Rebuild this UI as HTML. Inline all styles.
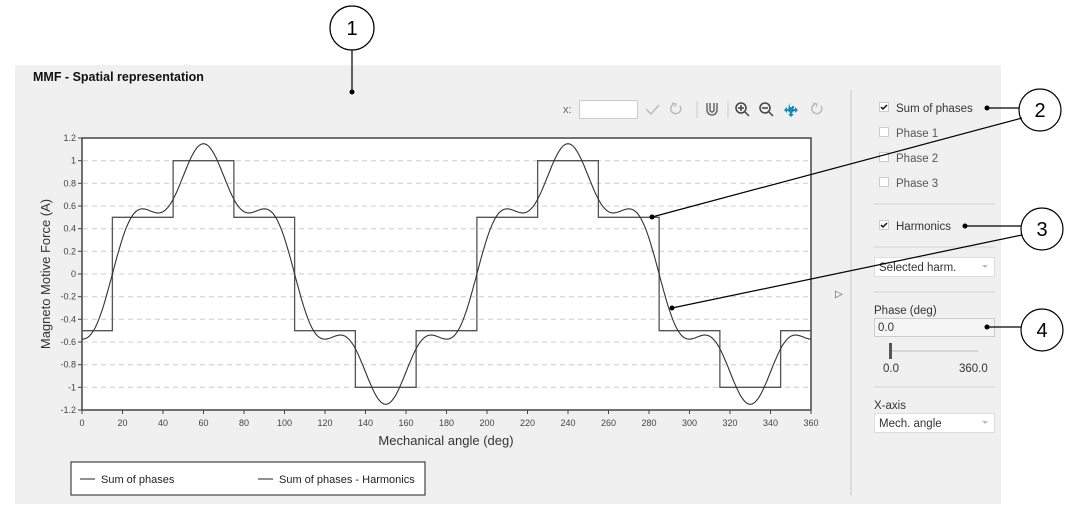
<!DOCTYPE html>
<html><head><meta charset="utf-8"><style>
body{margin:0;width:1080px;height:515px;background:#fff;font-family:"Liberation Sans",Arial,sans-serif;overflow:hidden;position:relative}
svg{position:absolute;left:0;top:0}
text{font-family:"Liberation Sans",Arial,sans-serif}
</style></head><body>
<svg id="s" width="1080" height="515" viewBox="0 0 1080 515">
<rect x="15" y="65" width="986" height="439" fill="#f0f0f0"/>
<text x="33" y="81" font-size="12.5" font-weight="bold" fill="#111">MMF - Spatial representation</text>
<line x1="851" y1="90" x2="851" y2="495" stroke="#c8c8c8"/>
<text x="563" y="113" font-size="11" fill="#666">x:</text>
<rect x="579.5" y="100.5" width="58" height="18" fill="#fff" stroke="#ccc"/>
<path d="M646 109 l5 5 l8 -9" fill="none" stroke="#bbb" stroke-width="1.5"/>
<path d="M674 104 a5 5 0 1 0 6 2" fill="none" stroke="#bbb" stroke-width="1.5"/><path d="M672 103 l4 1 l-1 3" fill="none" stroke="#bbb" stroke-width="1.3"/>
<line x1="697" y1="101" x2="697" y2="118" stroke="#ccc"/>
<path d="M707 103 v7 a5 5 0 0 0 10 0 v-7 M710 103 v7 a2 2 0 0 0 4 0 v-7" fill="none" stroke="#555" stroke-width="1.3"/>
<line x1="728" y1="101" x2="728" y2="118" stroke="#ccc"/>
<circle cx="741" cy="108" r="5" fill="none" stroke="#444" stroke-width="1.5"/><path d="M738 108h6M741 105v6M745 112l4 4" stroke="#444" stroke-width="1.5"/>
<circle cx="765" cy="108" r="5" fill="none" stroke="#444" stroke-width="1.5"/><path d="M762 108h6M769 112l4 4" stroke="#444" stroke-width="1.5"/>
<path d="M791 103l3 3h-2v2h2v-2M791 103l-3 3h2v2h-2M784 110l3-3v2h2v2h-2v2zM798 110l-3-3v2h-2v2h2v2zM791 117l3-3h-2v-2h-2v2h-2z" fill="#1a8ab8"/>
<circle cx="791" cy="110" r="3" fill="#1a8ab8"/>
<path d="M815 104 a5 5 0 1 0 6 2" fill="none" stroke="#bbb" stroke-width="1.5"/><path d="M813 103 l4 1 l-1 3" fill="none" stroke="#bbb" stroke-width="1.3"/>
<rect x="82" y="138" width="729" height="272" fill="#fff"/>
<g id="grid"></g>
<rect x="82" y="138" width="729" height="272" fill="none" stroke="#444" stroke-width="1.5"/>
<path id="step" fill="none" stroke="#555" stroke-width="1.3"/>
<path id="harm" fill="none" stroke="#333" stroke-width="1.1"/>
<text x="446" y="445" font-size="13" fill="#333" text-anchor="middle">Mechanical angle (deg)</text>
<text transform="translate(50,274) rotate(-90)" font-size="13" fill="#333" text-anchor="middle">Magneto Motive Force (A)</text>
<text x="835" y="297" font-size="10" fill="#555">▷</text>
<rect x="71" y="462" width="354" height="33" fill="#fff" stroke="#444" stroke-width="1.2"/>
<line x1="80" y1="479" x2="95" y2="479" stroke="#222"/><text x="101" y="483" font-size="11" fill="#222">Sum of phases</text>
<line x1="258" y1="479" x2="273" y2="479" stroke="#222"/><text x="279" y="483" font-size="11" fill="#222">Sum of phases - Harmonics</text>
<g font-size="11.5" fill="#333">
<rect x="879.5" y="102.5" width="9" height="9" fill="#fff" stroke="#ccc"/><path d="M881 107l2 2l4-4" stroke="#111" stroke-width="1.5" fill="none"/><text x="896" y="112">Sum of phases</text>
<rect x="879.5" y="127.5" width="9" height="9" fill="#fff" stroke="#ccc"/><text x="896" y="137" fill="#555">Phase 1</text>
<rect x="879.5" y="152.5" width="9" height="9" fill="#fff" stroke="#ccc"/><text x="896" y="162" fill="#555">Phase 2</text>
<rect x="879.5" y="177.5" width="9" height="9" fill="#fff" stroke="#ccc"/><text x="896" y="187" fill="#555">Phase 3</text>
<line x1="874" y1="204" x2="995" y2="204" stroke="#d4d4d4"/>
<rect x="879.5" y="220.5" width="9" height="9" fill="#fff" stroke="#ccc"/><path d="M881 225l2 2l4-4" stroke="#111" stroke-width="1.5" fill="none"/><text x="896" y="230">Harmonics</text>
<line x1="874" y1="247" x2="995" y2="247" stroke="#d4d4d4"/>
<rect x="874.5" y="257.5" width="120" height="19" fill="#fff" stroke="#ddd"/><text x="879" y="271">Selected harm.</text><path d="M982 265l3 3l3-3z" fill="#bbb"/>
<line x1="874" y1="292" x2="995" y2="292" stroke="#d4d4d4"/>
<text x="874" y="314">Phase (deg)</text>
<rect x="874.5" y="318.5" width="120" height="18" fill="#f5f5f5" stroke="#ccc"/><text x="878" y="331">0.0</text>
<line x1="891" y1="351" x2="978" y2="351" stroke="#bbb"/><rect x="889" y="343" width="3" height="16" fill="#555"/>
<text x="883" y="372">0.0</text><text x="959" y="372">360.0</text>
<line x1="874" y1="387" x2="995" y2="387" stroke="#d4d4d4"/>
<text x="874" y="409">X-axis</text>
<rect x="874.5" y="413.5" width="120" height="19" fill="#fff" stroke="#ddd"/><text x="879" y="427">Mech. angle</text><path d="M982 421l3 3l3-3z" fill="#bbb"/>
</g>
<g stroke="#000" fill="none" stroke-width="1.2">
<circle cx="352" cy="28" r="22" fill="#fff"/>
<line x1="352" y1="50" x2="352" y2="92"/>
<circle cx="1040" cy="110" r="21" fill="#fff"/>
<line x1="988" y1="108" x2="1019" y2="108"/><line x1="1022" y1="118" x2="652" y2="217"/>
<circle cx="1042" cy="229" r="21" fill="#fff"/>
<line x1="966" y1="226" x2="1021" y2="226"/><line x1="1022" y1="235" x2="672" y2="308"/>
<circle cx="1042" cy="330" r="21" fill="#fff"/>
<line x1="988" y1="327" x2="1021" y2="327"/>
</g>
<g fill="#000"><circle cx="352" cy="92" r="2.5"/><circle cx="987" cy="108" r="2.5"/><circle cx="652" cy="217" r="2.5"/><circle cx="965" cy="226" r="2.5"/><circle cx="672" cy="308" r="2.5"/><circle cx="987" cy="327" r="2.5"/></g>
<g font-size="20" fill="#000" text-anchor="middle"><text x="352" y="35">1</text><text x="1040" y="117">2</text><text x="1042" y="236">3</text><text x="1042" y="337">4</text></g>
</svg>
<script>
var X=function(d){return 82+d*729/360},Y=function(v){return 274-v*113.33};
var g='';
for(var v=-1.2;v<=1.21;v+=0.2){var y=Y(v).toFixed(1);var lab=Math.abs(v)<1e-6?'0':(Math.round(v*10)/10).toString();
if(Math.abs(v)<1.15)g+='<line x1="83" x2="810" y1="'+y+'" y2="'+y+'" stroke="#ccc" stroke-dasharray="5,4"/>';
g+='<line x1="78" x2="82" y1="'+y+'" y2="'+y+'" stroke="#444"/><text x="76" y="'+(+y+3)+'" font-size="9" fill="#444" text-anchor="end">'+lab+'</text>';}
for(var d=0;d<=360;d+=20){var x=X(d).toFixed(1);g+='<line x1="'+x+'" x2="'+x+'" y1="410" y2="414" stroke="#444"/><text x="'+x+'" y="426" font-size="9" fill="#444" text-anchor="middle">'+d+'</text>';}
document.getElementById('grid').innerHTML=g;
function f(t){t=((t%180)+180)%180;if(t<15)return -0.5;if(t<45)return 0.5;if(t<75)return 1;if(t<105)return 0.5;if(t<135)return -0.5;if(t<165)return -1;return -0.5;}
var p='M'+X(0)+' '+Y(-0.5),prev=-0.5;
for(var d=15;d<360;d+=30){p+='L'+X(d)+' '+Y(prev);var nv=f(d+0.1);p+='L'+X(d)+' '+Y(nv);prev=nv;}
p+='L'+X(360)+' '+Y(prev);
document.getElementById('step').setAttribute('d',p);
var q='';for(var d=0;d<=360;d+=0.5){var r=(d-60)*Math.PI/180;var v=0.956*Math.cos(2*r)+0.194*Math.cos(10*r);q+=(d?'L':'M')+X(d).toFixed(1)+' '+Y(v).toFixed(1);}
document.getElementById('harm').setAttribute('d',q);
</script>
</body></html>
